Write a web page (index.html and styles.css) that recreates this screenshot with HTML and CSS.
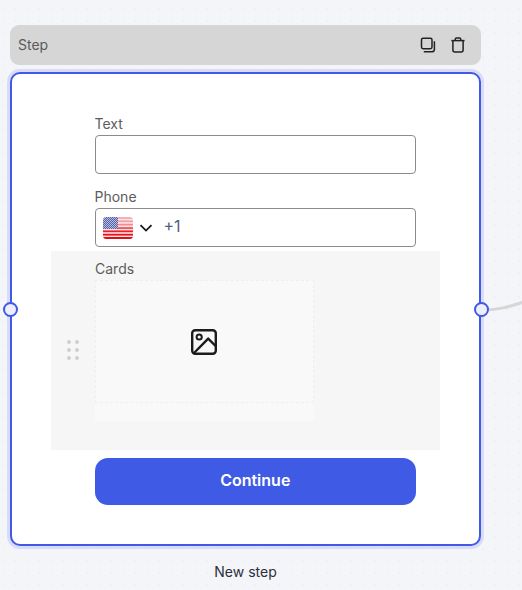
FILE: index.html
```html
<!DOCTYPE html>
<html lang="en">
<head>
<meta charset="utf-8">
<title>Step</title>
<link rel="stylesheet" href="styles.css">
</head>
<body>
<svg class="edge" width="40" height="20" viewBox="0 0 40 20"><path d="M0 11 C14 11 24 8 40 3" fill="none" stroke="#d6d6d6" stroke-width="3"/></svg>
<main class="step">
  <header class="step-head">
    <span class="step-title">Step</span>
    <div class="step-actions">
      <svg width="18" height="18" viewBox="0 0 18 18" fill="none" stroke="#222" stroke-width="1.5"><rect x="2.5" y="2.2" width="10.5" height="10.5" rx="1.6"/><path d="M15.4 5.2V13.4a2.4 2.4 0 0 1-2.4 2.4H4.8"/></svg>
      <svg width="18" height="18" viewBox="0 0 18 18" fill="none" stroke="#222" stroke-width="1.5"><path d="M2.4 4.6H15.6"/><path d="M6.2 4.4V3.4a1.3 1.3 0 0 1 1.3-1.3h3a1.3 1.3 0 0 1 1.3 1.3v1"/><path d="M3.9 4.6V14a2 2 0 0 0 2 2h6.2a2 2 0 0 0 2-2V4.6"/></svg>
    </div>
  </header>
  <section class="node">
    <span class="handle handle-left"></span>
    <span class="handle handle-right"></span>
    <div class="field">
      <label class="label">Text</label>
      <div class="input"></div>
    </div>
    <div class="field field-phone">
      <label class="label">Phone</label>
      <div class="input input-phone">
        <svg class="flag" width="30" height="22" viewBox="0 0 30 22">
          <defs>
            <clipPath id="flagclip"><rect width="30" height="22" rx="3.5"/></clipPath>
            <pattern id="stars" width="2" height="2" patternUnits="userSpaceOnUse"><rect width="2" height="2" fill="#5560a8"/><rect width="1" height="1" fill="#b9bede"/><rect x="1" y="1" width="1" height="1" fill="#b9bede"/></pattern>
          </defs>
          <g clip-path="url(#flagclip)">
            <rect width="30" height="22" fill="#fbe3e3"/>
            <rect y="0" width="30" height="2" fill="#f6b0b3"/>
            <rect y="3.4" width="30" height="1.7" fill="#f59ea2"/>
            <rect y="6.8" width="30" height="1.7" fill="#f38a8f"/>
            <rect y="10.2" width="30" height="1.7" fill="#ee4a50"/>
            <rect y="13.4" width="30" height="1.8" fill="#e8202a"/>
            <rect y="16.8" width="30" height="1.8" fill="#e3121c"/>
            <rect y="20" width="30" height="2" fill="#de0e18"/>
            <rect width="15" height="12" fill="url(#stars)"/>
          </g>
        </svg>
        <svg class="chev" width="14" height="10" viewBox="0 0 14 10" fill="none" stroke="#1a1a1a" stroke-width="1.8"><path d="M1.5 2.2L7 7.6L12.5 2.2"/></svg>
        <span class="dial">+1</span>
      </div>
    </div>
    <div class="cards-zone">
      <div class="drag">
        <i></i><i></i><i></i><i></i><i></i><i></i>
      </div>
      <div class="cards">
        <label class="label">Cards</label>
        <div class="card-shell">
          <div class="card-drop">
            <svg width="28" height="28" viewBox="0 0 28 28" fill="none" stroke="#1c1c1c" stroke-width="2.4" stroke-linejoin="round"><rect x="2.2" y="2.2" width="23.6" height="23.6" rx="3"/><circle cx="9.2" cy="9" r="2.6" stroke-width="2"/><path d="M4 25L18.2 10.6L25.6 18"/></svg>
          </div>
        </div>
      </div>
    </div>
    <button class="continue" type="button">Continue</button>
  </section>
  <p class="caption">New step</p>
</main>
</body>
</html>
```
FILE: styles.css
```css
* { box-sizing: border-box; }
html, body { margin: 0; height: 100%; }
body {
  width: 522px;
  height: 590px;
  overflow: hidden;
  position: relative;
  padding: 25px 0 0 10px;
  font-family: Inter, "Liberation Sans", sans-serif;
  background-color: #f4f5f8;
  background-image: radial-gradient(circle, #eff0f4 1.4px, transparent 1.6px);
  background-size: 12px 12px;
  background-position: -3px 3px;
}
.edge { position: absolute; left: 484px; top: 299px; }
.step { width: 471px; display: flex; flex-direction: column; }
.step-head {
  height: 39.5px;
  background: #d6d6d6;
  border-radius: 9px;
  display: flex;
  align-items: center;
  justify-content: space-between;
  padding: 0 14px 0 8px;
  margin-bottom: 7.5px;
}
.step-title { font-size: 14px; color: #5a5a5a; }
.step-actions { display: flex; gap: 12px; }
.step-actions svg { display: block; }
.node {
  position: relative;
  height: 474px;
  background: #fff;
  border: 2px solid #4059e6;
  border-radius: 10px;
  box-shadow: 0 0 0 3px #d9dbf9;
  padding: 41px 63px 0 83px;
  margin: 0;
  display: flex;
  flex-direction: column;
}
.handle {
  position: absolute;
  top: 228px;
  width: 15px;
  height: 15px;
  border-radius: 50%;
  background: #eceefc;
  border: 2.5px solid #4059e6;
}
.handle-left { left: -9.5px; }
.handle-right { right: -9.5px; }
.field { width: 321.5px; margin-left: -0.5px; }
.field-phone { margin-top: 14px; }
.label { display: block; font-size: 14px; line-height: 17px; color: #5c5c5c; margin-bottom: 3px; }
.input {
  height: 39px;
  background: #fff;
  border: 1px solid #8c8c8c;
  border-radius: 4px;
}
.input-phone { display: flex; align-items: center; padding-left: 7px; }
.flag { display: block; flex: none; }
.chev { display: block; margin-left: 6px; margin-top: 1px; }
.dial { margin-left: 11px; padding-bottom: 3px; font-size: 16px; color: #55617f; }
.cards-zone {
  width: 389px;
  height: 199px;
  margin: 4px 0 0 -44px;
  background: #f6f6f6;
  display: flex;
}
.drag {
  width: 44px;
  padding: 89px 0 0 16px;
  display: grid;
  grid-template-columns: 4px 4px;
  grid-auto-rows: 4px;
  column-gap: 4px;
  row-gap: 4px;
}
.drag i { width: 4px; height: 4px; border-radius: 50%; background: #cfcfd2; }
.cards { padding-top: 9px; }
.cards .label { margin-bottom: 3px; }
.card-shell {
  width: 219px;
  height: 142px;
  background: #f9f9f9;
  border-radius: 4px;
}
.card-drop {
  height: 123px;
  border: 1px dashed #efefef;
  display: flex;
  align-items: center;
  justify-content: center;
  padding: 1px 1px 0 0;
}
.card-drop svg { display: block; }
.continue {
  width: 321.5px;
  height: 47px;
  margin: 8px 0 0 -0.5px;
  padding: 0 0 3px;
  background: #3f5ae5;
  border: 0;
  border-radius: 13px;
  color: #fff;
  font: 600 16px Inter, "Liberation Sans", sans-serif;
}
.caption {
  margin: 17px 0 0;
  text-align: center;
  font-size: 14px;
  line-height: 17px;
  color: #2b2f3f;
}
```
